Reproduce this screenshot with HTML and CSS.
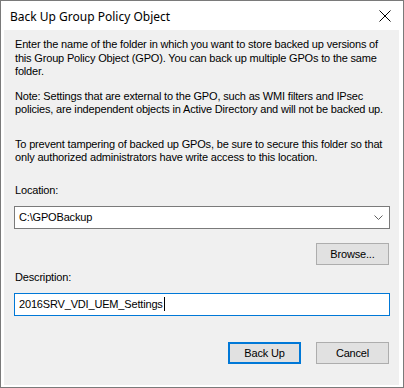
FILE: index.html
```html
<!DOCTYPE html>
<html lang="en">
<head>
    <meta charset="UTF-8">
    <title>Back Up Group Policy Object</title>
    <link rel="stylesheet" href="styles.css">
</head>
<body>
    <div class="window">
        <div class="titlebar">
            <span class="title">Back Up Group Policy Object</span>
            <svg class="close" width="12" height="12" viewBox="0 0 12 12">
                <path d="M0.5 0.5 L11.5 11.5 M11.5 0.5 L0.5 11.5" stroke="#000" stroke-width="1" fill="none"/>
            </svg>
        </div>
        <div class="client">
            <p class="intro">Enter the name of the folder in which you want to store backed up versions of<br>this Group Policy Object (GPO). You can back up multiple GPOs to the same<br>folder.</p>
            <p class="note">Note: Settings that are external to the GPO, such as WMI filters and IPsec<br>policies, are independent objects in Active Directory and will not be backed up.</p>
            <p class="warn">To prevent tampering of backed up GPOs, be sure to secure this folder so that<br>only authorized administrators have write access to this location.</p>

            <div class="field-label">Location:</div>
            <div class="combo">
                <span class="combo-text">C:\GPOBackup</span>
                <svg class="chevron" width="9" height="5" viewBox="0 0 9 5">
                    <path d="M0.5 0.5 L4.5 4.5 L8.5 0.5" stroke="#606060" stroke-width="1" fill="none"/>
                </svg>
            </div>
            <div class="row browse-row">
                <button class="btn">Browse...</button>
            </div>

            <div class="field-label desc-label">Description:</div>
            <div class="textbox">
                <span>2016SRV_VDI_UEM_Settings</span><span class="caret"></span>
            </div>

            <div class="row actions">
                <button class="btn default">Back Up</button>
                <button class="btn">Cancel</button>
            </div>
        </div>
    </div>
</body>
</html>
```

FILE: styles.css
```css
body {
    margin: 0;
    width: 404px;
    height: 388px;
    overflow: hidden;
    font-family: "Liberation Sans", Arial, sans-serif;
    font-size: 11px;
    letter-spacing: -0.17px;
    color: #000;
}
.window {
    width: 402px;
    height: 386px;
    border: 1px solid #7a7a7a;
    background: #fff;
    display: flex;
    flex-direction: column;
}
.titlebar {
    height: 29px;
    display: flex;
    align-items: center;
    justify-content: space-between;
    padding: 0 12px 0 9px;
}
.title {
    font-family: "Noto Sans", "Open Sans", sans-serif;
    font-size: 12px;
    letter-spacing: 0;
    color: #000;
    padding-top: 1px;
}
.close {
    display: block;
}
.client {
    margin: 0 4px 2px 3px;
    flex: 1;
    background: #f0f0f0;
    padding: 0 9px 0 10px;
    display: flex;
    flex-direction: column;
}
p {
    margin: 0;
    line-height: 13.5px;
    white-space: nowrap;
    padding-left: 1px;
}
.intro {
    margin-top: 8px;
}
.note {
    margin-top: 11px;
}
.warn {
    margin-top: 21px;
}
.field-label {
    line-height: 13px;
    margin-top: 19px;
    padding-left: 1px;
}
.combo {
    margin-top: 9px;
    height: 23px;
    box-sizing: border-box;
    border: 1px solid #7a7a7a;
    background: #fff;
    display: flex;
    align-items: center;
    justify-content: space-between;
    padding: 0 6px 0 4px;
}
.chevron {
    display: block;
}
.row {
    display: flex;
    justify-content: flex-end;
    gap: 14px;
}
.browse-row {
    margin-top: 14px;
}
.btn {
    width: 73px;
    height: 22px;
    box-sizing: border-box;
    background: #e1e1e1;
    border: 1px solid #adadad;
    font-family: "Liberation Sans", Arial, sans-serif;
    font-size: 11px;
    letter-spacing: -0.17px;
    color: #000;
    padding: 0;
    margin-right: 1px;
}
.btn.default {
    border: 2px solid #0078d7;
}
.desc-label {
    margin-top: 6px;
}
.textbox {
    margin-top: 9px;
    height: 23px;
    box-sizing: border-box;
    border: 1px solid #0078d7;
    background: #fff;
    display: flex;
    align-items: center;
    padding: 0 4px 0 4px;
}
.caret {
    width: 1px;
    height: 14px;
    background: #000;
    margin-left: 1px;
}
.actions {
    margin-top: 26px;
}
```
